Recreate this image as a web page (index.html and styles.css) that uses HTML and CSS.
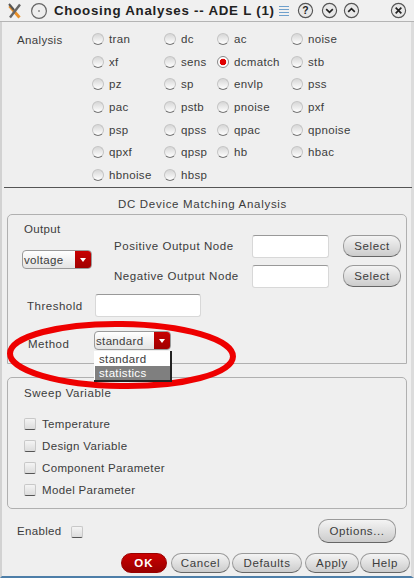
FILE: index.html
```html
<!DOCTYPE html>
<html>
<head>
<meta charset="utf-8">
<title>Choosing Analyses -- ADE L (1)</title>
<link rel="stylesheet" href="styles.css">
</head>
<body>
<div class="window">
  <header class="titlebar">
    <svg class="ti ti-x" viewBox="0 0 16 16"><path d="M2.5 3 L12.5 14.5" stroke="#e8902a" stroke-width="3"/><path d="M13 1.5 L3 14.5" stroke="#666" stroke-width="2.4"/><path d="M2 1 L7 7" stroke="#555" stroke-width="2"/></svg>
    <svg class="ti ti-menu" viewBox="0 0 18 18"><circle cx="9" cy="9" r="7.4" fill="#eee" stroke="#666" stroke-width="1.2"/><circle cx="9" cy="9" r=".8" fill="#444"/></svg>
    <div class="title">Choosing Analyses -- ADE L (1)</div>
    <div class="grip"><i></i><i></i><i></i><i></i></div>
    <svg class="ti tb-q" viewBox="0 0 18 18"><circle cx="9" cy="9" r="7.5" fill="#e8e8e8" stroke="#555" stroke-width="1.2"/><text x="9" y="13" text-anchor="middle" class="qmark">?</text></svg>
    <svg class="ti tb-d" viewBox="0 0 18 18"><circle cx="9" cy="9" r="7.5" fill="#e8e8e8" stroke="#555" stroke-width="1.2"/><path d="M5.5 7.5 L9 11 L12.5 7.5" fill="none" stroke="#222" stroke-width="1.7"/></svg>
    <svg class="ti tb-u" viewBox="0 0 18 18"><circle cx="9" cy="9" r="7.5" fill="#e8e8e8" stroke="#555" stroke-width="1.2"/><path d="M5.5 10.5 L9 7 L12.5 10.5" fill="none" stroke="#222" stroke-width="1.7"/></svg>
    <svg class="ti tb-c" viewBox="0 0 18 18"><circle cx="9" cy="9" r="7.5" fill="#e8e8e8" stroke="#555" stroke-width="1.2"/><path d="M6 6 L12 12 M12 6 L6 12" fill="none" stroke="#222" stroke-width="1.8"/></svg>
  </header>

  <section class="analysis">
    <div class="analysis-label">Analysis</div>
    <div class="radio-grid">
      <label class="radio"><i></i>tran</label><label class="radio"><i></i>dc</label><label class="radio"><i></i>ac</label><label class="radio"><i></i>noise</label>
      <label class="radio"><i></i>xf</label><label class="radio"><i></i>sens</label><label class="radio on"><i></i>dcmatch</label><label class="radio"><i></i>stb</label>
      <label class="radio"><i></i>pz</label><label class="radio"><i></i>sp</label><label class="radio"><i></i>envlp</label><label class="radio"><i></i>pss</label>
      <label class="radio"><i></i>pac</label><label class="radio"><i></i>pstb</label><label class="radio"><i></i>pnoise</label><label class="radio"><i></i>pxf</label>
      <label class="radio"><i></i>psp</label><label class="radio"><i></i>qpss</label><label class="radio"><i></i>qpac</label><label class="radio"><i></i>qpnoise</label>
      <label class="radio"><i></i>qpxf</label><label class="radio"><i></i>qpsp</label><label class="radio"><i></i>hb</label><label class="radio"><i></i>hbac</label>
      <label class="radio"><i></i>hbnoise</label><label class="radio"><i></i>hbsp</label>
    </div>
  </section>

  <div class="heading">DC Device Matching Analysis</div>

  <section class="group group-main">
    <div class="out-row">
      <div class="out-col">
        <div class="out-label">Output</div>
        <div class="combo combo-voltage"><span>voltage</span><b></b></div>
      </div>
      <div class="node-col">
        <div class="node-row"><span class="node-label">Positive Output Node</span><div class="input input-node"></div><button class="btn btn-select">Select</button></div>
        <div class="node-row"><span class="node-label">Negative Output Node</span><div class="input input-node"></div><button class="btn btn-select">Select</button></div>
      </div>
    </div>
    <div class="th-row"><span class="th-label">Threshold</span><div class="input input-th"></div></div>
    <div class="method-row"><span class="method-label">Method</span><div class="combo combo-method"><span>standard</span><b></b></div></div>
  </section>

  <section class="group group-sweep">
    <div class="sweep-title">Sweep Variable</div>
    <label class="check"><i></i>Temperature</label>
    <label class="check"><i></i>Design Variable</label>
    <label class="check"><i></i>Component Parameter</label>
    <label class="check"><i></i>Model Parameter</label>
  </section>

  <div class="enabled-row">
    <span>Enabled</span><i class="box"></i>
    <button class="btn btn-options">Options...</button>
  </div>

  <footer class="actions">
    <button class="btn btn-ok">OK</button>
    <button class="btn btn-cancel">Cancel</button>
    <button class="btn btn-defaults">Defaults</button>
    <button class="btn btn-apply">Apply</button>
    <button class="btn btn-help">Help</button>
  </footer>

  <svg class="ellipse" viewBox="0 0 414 578"><ellipse cx="121.5" cy="355" rx="111.5" ry="31" transform="rotate(0.8 121.5 355)" fill="none" stroke="#ee0000" stroke-width="6"/></svg>
  <div class="popup"><div>standard</div><div class="sel">statistics</div></div>
</div>
</body>
</html>
```
FILE: styles.css
```css
* { box-sizing: border-box; }
html, body { margin: 0; height: 100%; }
body { width: 414px; height: 578px; overflow: hidden; background: #efefef; }
.window {
  position: relative;
  width: 414px;
  height: 578px;
  padding-left: 2px;
  background: #efefef;
  font: 11.5px/14px "Liberation Sans", Arial, sans-serif;
  letter-spacing: .34px;
  color: #3c3c3c;
  border-left: 2px solid #d2d2d2;
  border-bottom: 2px solid #4d7ea8;
  border-right: 3px solid #dcdcdc;
}
.titlebar {
  display: flex;
  align-items: center;
  height: 22px;
  margin: 0 -3px 0 -4px;
  padding-left: 7px;
  background: #f0f0f0;
  border-bottom: 1px solid #b4b4b4;
}
.ti { width: 16px; height: 16px; flex: none; }
.ti-menu { margin-left: 7px; width: 18px; height: 18px; }
.title { margin-left: 6px; width: 220px; font-size: 13.3px; font-weight: bold; color: #222; letter-spacing: .75px; white-space: nowrap; }
.grip { width: 10px; margin-left: 5px; display: flex; flex-direction: column; gap: 2px; flex: none; }
.grip i { display: block; height: 1px; background: #6fa0cc; }
.tb-q, .tb-d, .tb-u, .tb-c { width: 17px; height: 17px; }
.tb-q { margin-left: 8px; }
.tb-d { margin-left: 7px; }
.tb-u { margin-left: 5px; }
.tb-c { margin-left: 30px; }
.qmark { font: bold 11px "Liberation Sans", sans-serif; fill: #222; }

.analysis { display: flex; padding: 6px 0 0 13px; height: 166px; border-bottom: 1px solid #555; margin-right: -1px; }
.analysis-label { width: 75px; padding-top: 5px; flex: none; }
.radio-grid {
  display: grid;
  grid-template-columns: 72px 53px 74px 80px;
  grid-auto-rows: 22.7px;
}
.radio { display: flex; align-items: center; height: 22px; white-space: nowrap; }
.radio i {
  width: 12px; height: 12px; flex: none; margin-right: 5px; border-radius: 50%;
  background: linear-gradient(#d6d6d6, #ffffff);
  border: 1px solid #c4c4c4;
  border-bottom-color: #777;
}
.radio.on i {
  background: radial-gradient(circle, #e00000 0 3px, #fff 3.6px);
  border-color: #888;
}

.heading { text-align: center; height: 26px; padding-top: 9px; padding-right: 10px; letter-spacing: .7px; }

.group { border: 1px solid #b0b0b0; border-radius: 5px; margin: 0 4px 0 3px; }
.group-main { height: 150px; border-radius: 5px 5px 0 0; }
.out-row { display: flex; }
.out-col { width: 106px; padding: 7px 0 0 16px; flex: none; }
.out-label { margin-bottom: 7px; height: 21px; }
.combo {
  position: relative;
  display: flex; align-items: center; justify-content: space-between;
  height: 19px;
  border: 1px solid #9a9a9a; border-radius: 4px;
  background: linear-gradient(#ffffff, #e4e4e4);
  overflow: hidden;
  padding-left: 1px;
}
.combo-voltage { width: 70px; margin-left: -2px; }
.combo b {
  display: flex; align-items: center; justify-content: center;
  width: 16px; height: 100%;
  background: linear-gradient(#c80000, #a00000);
}
.combo b::after {
  content: ""; width: 0; height: 0;
  border-left: 3.5px solid transparent; border-right: 3.5px solid transparent;
  border-top: 4px solid #fff;
}
.node-col { padding-top: 16px; }
.node-row { display: flex; align-items: center; height: 30px; }
.node-label { width: 138px; white-space: nowrap; letter-spacing: .55px; }
.input { background: #fff; border: 1px solid #d8d8d8; border-top-color: #999; border-radius: 3px; height: 23px; }
.input-node { width: 77px; margin-right: 14px; }
.btn {
  font: inherit; letter-spacing: .6px; color: #3c3c3c;
  background: linear-gradient(#f4f4f4, #cccccc);
  border: 1px solid #9a9a9a; border-bottom-color: #666;
  border-radius: 10px;
  padding: 0;
}
.btn-select { width: 58px; height: 22px; }
.th-row { display: flex; align-items: center; height: 23px; margin-top: 3px; padding-left: 19px; }
.th-label { width: 68px; letter-spacing: .5px; }
.input-th { width: 106px; }
.method-row { display: flex; align-items: center; height: 19px; margin-top: 14px; padding-left: 20px; }
.method-label { width: 66px; padding-top: 7px; letter-spacing: .5px; }
.combo-method { width: 77px; }

.group-sweep { margin-top: 13px; height: 132px; padding: 8px 0 0 16px; }
.sweep-title { height: 22px; letter-spacing: .55px; }
.check { display: flex; align-items: center; height: 22px; white-space: nowrap; }
.check i, .box {
  width: 12px; height: 12px; flex: none; margin-right: 6px;
  background: linear-gradient(#f4f4f4, #dcdcdc);
  border: 1px solid #c8c8c8; border-bottom: 1.5px solid #555; border-radius: 2px;
}
.sweep-title + .check { margin-top: 5px; }

.enabled-row { display: flex; align-items: center; height: 24px; margin-top: 10px; padding-left: 13px; }
.box { margin: 1px 0 0 9px; }
.btn-options { margin-left: auto; margin-right: 15px; width: 78px; height: 24px; }

.actions { display: flex; margin-top: 10px; padding-left: 117px; }
.actions .btn { height: 20px; flex: none; }
.btn-ok { width: 46px; background: linear-gradient(#cc0000, #980000); color: #fff; font-weight: bold; border-color: #900; letter-spacing: 1.2px; }
.btn-cancel { width: 59px; margin-left: 4px; }
.btn-defaults { width: 70px; margin-left: 2px; }
.btn-apply { width: 54px; margin-left: 3px; }
.btn-help { width: 50px; margin-left: 1px; }

.ellipse { position: absolute; left: -2px; top: 0; width: 414px; height: 578px; pointer-events: none; }
.popup {
  position: absolute; left: 92px; top: 351px; width: 78px; height: 31px;
  background: #fff; border-right: 2px solid #222; border-bottom: 2px solid #222;
  padding: 1px 0 0 1px;
}
.popup div { padding-left: 4px; height: 14px; }
.popup .sel { background: #7f7f7f; color: #fff; }
```
